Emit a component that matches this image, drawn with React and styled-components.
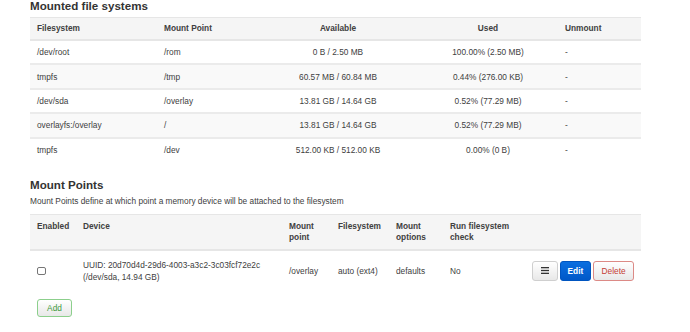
import styled, { createGlobalStyle } from "styled-components";

const GlobalStyle = createGlobalStyle`
  html, body {
    margin: 0;
    padding: 0;
    background: #fff;
  }
  body {
    font-family: "Liberation Sans", Arial, Helvetica, sans-serif;
    font-size: 8.3px;
    color: #404040;
  }
`;

const Page = styled.div`
  width: 611px;
  padding: 0 0 0 30px;
`;

const Title = styled.h2`
  margin: ${(p) => p.$mt || "0"} 0 0 0;
  font-size: 11.6px;
  line-height: 11px;
  font-weight: bold;
  color: #333;
`;

const Description = styled.p`
  margin: 6px 0 0 0;
  line-height: 11px;
`;

const Table = styled.table`
  width: 611px;
  table-layout: fixed;
  border-collapse: collapse;
  margin-top: ${(p) => p.$mt || "6px"};
`;

const Col = styled.col`
  width: ${(p) => p.$w}px;
`;

const HeadCell = styled.th`
  background: #f5f5f5;
  border-top: 1px solid #e6e6e6;
  border-bottom: 2px solid #e6e6e6;
  padding: ${(p) => (p.$tall ? "6px 7px 5px" : "0 7px")};
  height: ${(p) => (p.$tall ? "auto" : "21px")};
  line-height: 11.5px;
  text-align: ${(p) => p.$align || "left"};
  vertical-align: ${(p) => (p.$tall ? "top" : "middle")};
  font-weight: bold;
  color: #404040;
`;

const Row = styled.tr`
  background: ${(p) => (p.$striped ? "#f9f9f9" : "#fff")};
`;

const Cell = styled.td`
  border-top: 2px solid #ebebeb;
  padding: 0 7px;
  height: 22.4px;
  text-align: ${(p) => p.$align || "left"};
  vertical-align: middle;
  white-space: nowrap;
`;

const MountCell = styled.td`
  padding: 8px 7px 8px;
  line-height: 12px;
  vertical-align: middle;
  text-align: ${(p) => p.$align || "left"};
`;

const Check = styled.input.attrs({ type: "checkbox" })`
  appearance: none;
  display: block;
  margin: 0;
  width: 8.5px;
  height: 8.5px;
  border: 1px solid #767676;
  border-radius: 2px;
  background: #fff;
`;

const Actions = styled.div`
  display: flex;
  justify-content: flex-end;
  gap: 2.5px;
`;

const Button = styled.button`
  font-family: inherit;
  font-size: 8.3px;
  height: ${(p) => p.$h || 19.5}px;
  padding: 0;
  width: ${(p) => p.$w}px;
  border-radius: 3px;
  display: flex;
  align-items: center;
  justify-content: center;
  cursor: pointer;
  color: ${(p) =>
    p.$kind === "edit" ? "#fff" : p.$kind === "delete" ? "#c43c35" : p.$kind === "add" ? "#3c9a3c" : "#333"};
  background: ${(p) =>
    p.$kind === "edit"
      ? "linear-gradient(#0a6ee0, #0058c8)"
      : "linear-gradient(#fff, #e8e8e8)"};
  border: 1px solid
    ${(p) =>
      p.$kind === "edit"
        ? "#0055c0"
        : p.$kind === "delete"
        ? "#dc8a86"
        : p.$kind === "add"
        ? "#8ccf8c"
        : "#cfcfcf"};
  font-weight: ${(p) => (p.$kind === "edit" ? "bold" : "normal")};
`;

const AddWrap = styled.div`
  margin: 8px 0 0 7px;
`;

const MenuIcon = () => (
  <svg width="8" height="7" viewBox="0 0 8 7">
    <rect x="0" y="0" width="8" height="1.3" fill="#333" />
    <rect x="0" y="2.85" width="8" height="1.3" fill="#333" />
    <rect x="0" y="5.7" width="8" height="1.3" fill="#333" />
  </svg>
);

const mounts = [
  ["/dev/root", "/rom", "0 B / 2.50 MB", "100.00% (2.50 MB)"],
  ["tmpfs", "/tmp", "60.57 MB / 60.84 MB", "0.44% (276.00 KB)"],
  ["/dev/sda", "/overlay", "13.81 GB / 14.64 GB", "0.52% (77.29 MB)"],
  ["overlayfs:/overlay", "/", "13.81 GB / 14.64 GB", "0.52% (77.29 MB)"],
  ["tmpfs", "/dev", "512.00 KB / 512.00 KB", "0.00% (0 B)"],
];

export default function App() {
  return (
    <>
      <GlobalStyle />
      <Page>
        <Title>Mounted file systems</Title>
        <Table>
          <colgroup>
            <Col $w={127} />
            <Col $w={101} />
            <Col $w={160} />
            <Col $w={140} />
            <Col $w={83} />
          </colgroup>
          <thead>
            <tr>
              <HeadCell>Filesystem</HeadCell>
              <HeadCell>Mount Point</HeadCell>
              <HeadCell $align="center">Available</HeadCell>
              <HeadCell $align="center">Used</HeadCell>
              <HeadCell>Unmount</HeadCell>
            </tr>
          </thead>
          <tbody>
            {mounts.map((m, i) => (
              <Row key={i} $striped={i % 2 === 1}>
                <Cell>{m[0]}</Cell>
                <Cell>{m[1]}</Cell>
                <Cell $align="center">{m[2]}</Cell>
                <Cell $align="center">{m[3]}</Cell>
                <Cell>-</Cell>
              </Row>
            ))}
          </tbody>
        </Table>

        <Title $mt="18px">Mount Points</Title>
        <Description>
          Mount Points define at which point a memory device will be attached to the filesystem
        </Description>
        <Table $mt="7px">
          <colgroup>
            <Col $w={46} />
            <Col $w={206} />
            <Col $w={49} />
            <Col $w={58} />
            <Col $w={54} />
            <Col $w={82} />
            <Col $w={116} />
          </colgroup>
          <thead>
            <tr>
              <HeadCell $tall>Enabled</HeadCell>
              <HeadCell $tall>Device</HeadCell>
              <HeadCell $tall>Mount point</HeadCell>
              <HeadCell $tall>Filesystem</HeadCell>
              <HeadCell $tall>Mount options</HeadCell>
              <HeadCell $tall>Run filesystem check</HeadCell>
              <HeadCell $tall></HeadCell>
            </tr>
          </thead>
          <tbody>
            <tr>
              <MountCell>
                <Check />
              </MountCell>
              <MountCell>
                UUID: 20d70d4d-29d6-4003-a3c2-3c03fcf72e2c
                <br />
                (/dev/sda, 14.94 GB)
              </MountCell>
              <MountCell>/overlay</MountCell>
              <MountCell>auto (ext4)</MountCell>
              <MountCell>defaults</MountCell>
              <MountCell>No</MountCell>
              <MountCell>
                <Actions>
                  <Button $w={27}>
                    <MenuIcon />
                  </Button>
                  <Button $kind="edit" $w={32}>Edit</Button>
                  <Button $kind="delete" $w={43}>Delete</Button>
                </Actions>
              </MountCell>
            </tr>
          </tbody>
        </Table>
        <AddWrap>
          <Button $kind="add" $w={35} $h={17.6}>Add</Button>
        </AddWrap>
      </Page>
    </>
  );
}
